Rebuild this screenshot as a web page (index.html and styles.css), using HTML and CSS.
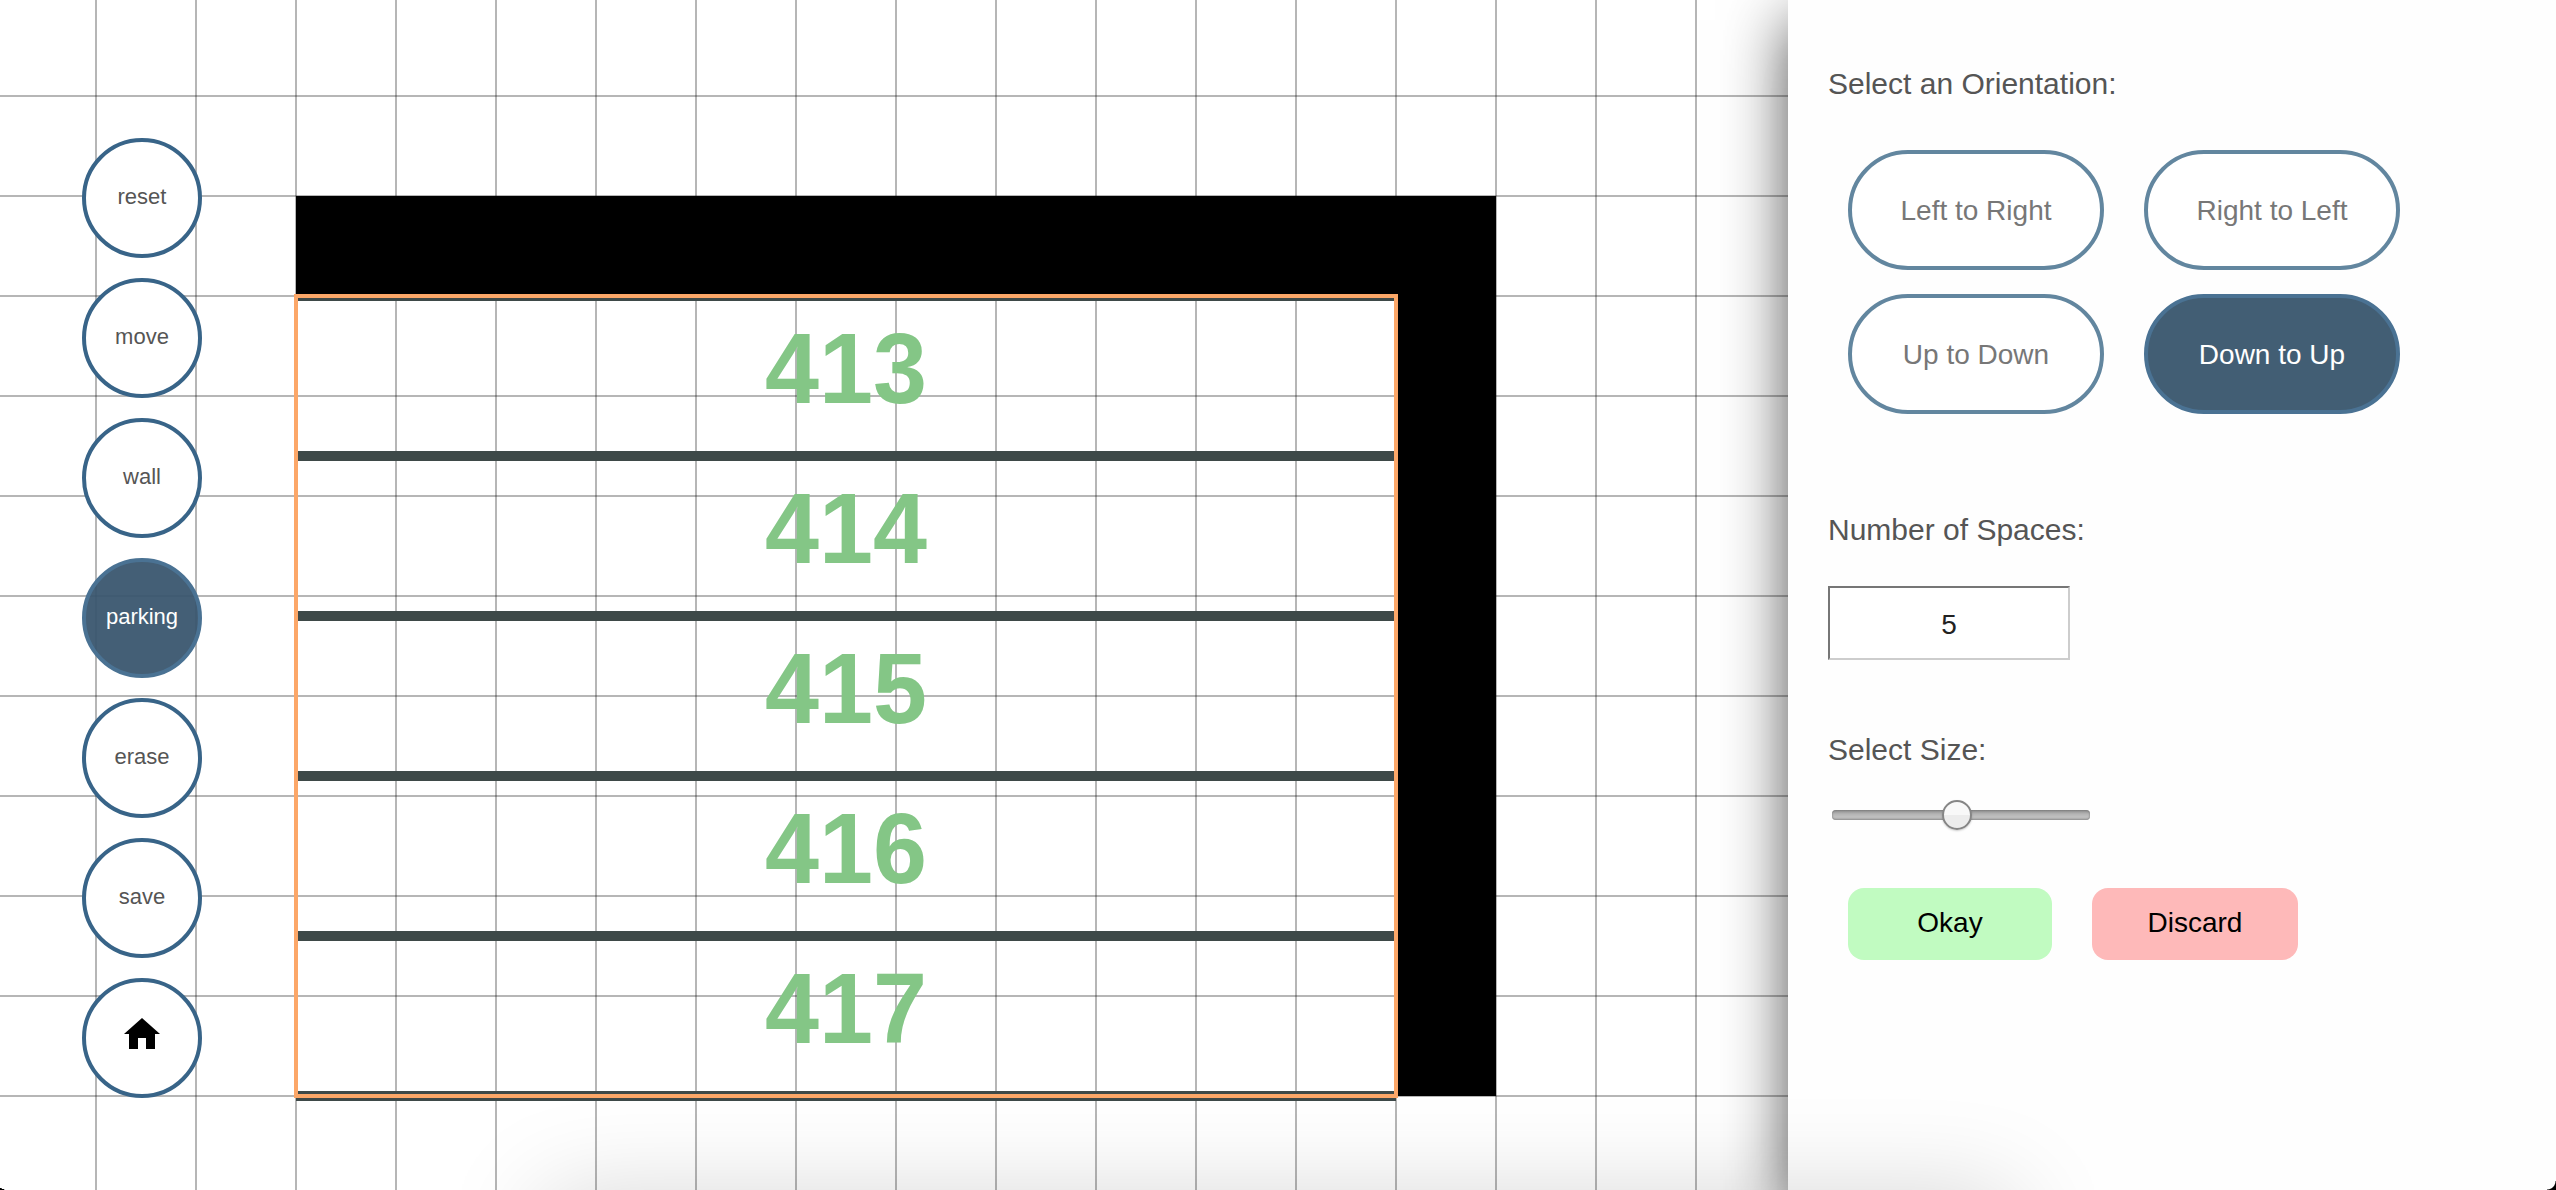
FILE: index.html
```html
<!DOCTYPE html>
<html lang="en">
<head>
<meta charset="utf-8">
<title>Parking Lot Editor</title>
<link rel="stylesheet" href="styles.css">
</head>
<body>
<div class="app">
  <main class="workspace">
    <svg class="lot" width="1788" height="1190" viewBox="0 0 1788 1190">
      <defs>
        <pattern id="vlines" x="95" y="0" width="100" height="100" patternUnits="userSpaceOnUse"><rect class="grid-line" width="2" height="100"/></pattern>
        <pattern id="hlines" x="0" y="95" width="100" height="100" patternUnits="userSpaceOnUse"><rect class="grid-line" width="100" height="2"/></pattern>
      </defs>
      <rect width="1788" height="1190" fill="url(#vlines)"/>
      <rect width="1788" height="1190" fill="url(#hlines)"/>
      <path class="divider" d="M296 296H1396M296 456H1396M296 616H1396M296 776H1396M296 936H1396M296 1096H1396"/>
      <path class="wall" d="M296 196H1496V1096H1396V296H296Z"/>
      <rect class="selection" x="296" y="296" width="1100" height="800"/>
      <g class="space-number">
        <text x="846" y="403" textLength="162" lengthAdjust="spacingAndGlyphs">413</text>
        <text x="846" y="563" textLength="162" lengthAdjust="spacingAndGlyphs">414</text>
        <text x="846" y="723" textLength="162" lengthAdjust="spacingAndGlyphs">415</text>
        <text x="846" y="883" textLength="162" lengthAdjust="spacingAndGlyphs">416</text>
        <text x="846" y="1043" textLength="162" lengthAdjust="spacingAndGlyphs">417</text>
      </g>
    </svg>
    <nav class="tools">
      <button class="tool">reset</button>
      <button class="tool">move</button>
      <button class="tool">wall</button>
      <button class="tool tool-active">parking</button>
      <button class="tool">erase</button>
      <button class="tool">save</button>
      <button class="tool tool-home" aria-label="home"><svg class="home" width="36" height="31" viewBox="0 0 36 31"><path d="M18 0L36 16H31V31H22V20H14V31H5V16H0Z"/></svg></button>
    </nav>
  </main>
  <aside class="panel">
    <h2 class="label">Select an Orientation:</h2>
    <div class="orientations">
      <button class="orientation">Left to Right</button>
      <button class="orientation">Right to Left</button>
      <button class="orientation">Up to Down</button>
      <button class="orientation orientation-active">Down to Up</button>
    </div>
    <h2 class="label label-spaces">Number of Spaces:</h2>
    <input class="spaces" type="text" value="5">
    <h2 class="label label-size">Select Size:</h2>
    <div class="slider"><div class="thumb"></div></div>
    <div class="actions">
      <button class="action okay">Okay</button>
      <button class="action discard">Discard</button>
    </div>
  </aside>
  <div class="drawer"></div>
  <i class="corner corner-left"></i>
  <i class="corner corner-right"></i>
</div>
</body>
</html>
```

FILE: styles.css
```css
* { box-sizing: border-box; }
body { margin: 0; background: #fff; font-family: "Liberation Sans", Arial, sans-serif; }
button, input { font-family: inherit; margin: 0; padding: 0; }
.app { position: relative; display: flex; width: 2556px; height: 1190px; overflow: hidden; }
.workspace { position: relative; flex: 0 0 1788px; }
.lot { position: absolute; left: 0; top: 0; }
.grid-line { fill: rgba(0, 0, 0, .285); }
.divider { stroke: #3e4948; stroke-width: 10; }
.wall { fill: #000; }
.selection { fill: none; stroke: #fca768; stroke-width: 4; }
.space-number { font-size: 101px; font-weight: bold; text-anchor: middle; fill: #84c686; }
.tools { position: relative; display: flex; flex-direction: column; gap: 20px; padding: 138px 0 0 82px; }
.tool { display: flex; align-items: center; justify-content: center; width: 120px; height: 120px; padding-bottom: 3px; border: 4px solid #386488; border-radius: 50%; background: #fff; color: #555; font-size: 22px; }
.tool-active { border-color: #4a7293; background: rgba(56, 85, 109, .94); color: #fff; }
.tool-home { padding-bottom: 10px; }
.home { display: block; fill: #000; }
.panel { position: relative; flex: 1; padding: 66px 40px 0; background: #fefefe; box-shadow: 0 20px 60px rgba(0, 0, 0, .66), 0 60px 40px rgba(0, 0, 0, .04); }
.label { margin: 0; height: 36px; font-size: 30px; line-height: 36px; font-weight: normal; color: #555; }
.orientations { display: grid; grid-template-columns: 256px 256px; gap: 24px 40px; padding: 48px 20px 0; }
.orientation { height: 120px; padding-top: 2px; border: 4px solid #62869f; border-radius: 60px; background: #fff; color: #777; font-size: 28px; }
.orientation-active { border-color: #4a7293; background: #425e74; color: #fff; }
.label-spaces { margin-top: 98px; }
.spaces { display: block; width: 242px; height: 74px; margin-top: 38px; padding-top: 3px; border: 2px solid; border-color: #767676 #cdcdcd #cdcdcd #767676; background: #fff; color: #222; font-size: 28px; text-align: center; }
.label-size { margin-top: 72px; }
.slider { display: flex; align-items: center; width: 258px; height: 10px; margin: 42px 0 0 4px; padding-left: 110px; border-radius: 4px; background: linear-gradient(#8a8a8a, #b4b4b4 40%, #c0c0c0 70%, #a8a8a8); box-shadow: inset 0 0 2px #666; }
.thumb { flex: none; width: 30px; height: 30px; border: 2px solid #858585; border-radius: 50%; background: linear-gradient(#f8f8f8 50%, #ececec 50%); box-shadow: 0 1px 2px rgba(0, 0, 0, .2); }
.actions { display: flex; gap: 40px; padding: 68px 20px 0; }
.action { height: 72px; padding-bottom: 3px; border: 0; border-radius: 16px; color: #000; font-size: 28px; }
.okay { width: 204px; background: #c1fbc1; }
.discard { width: 206px; background: #feb9b9; }
.drawer { position: absolute; left: 544px; top: 1196px; width: 1468px; height: 300px; box-shadow: 0 0 100px rgba(0, 0, 0, .17); }
.corner { position: absolute; bottom: 0; }
.corner-left { left: 0; width: 5px; height: 2px; background: linear-gradient(to top right, #000 50%, transparent 60%); }
.corner-right { right: 0; width: 9px; height: 9px; background: radial-gradient(circle at 0 0, transparent 8px, #000 9px); }
```
